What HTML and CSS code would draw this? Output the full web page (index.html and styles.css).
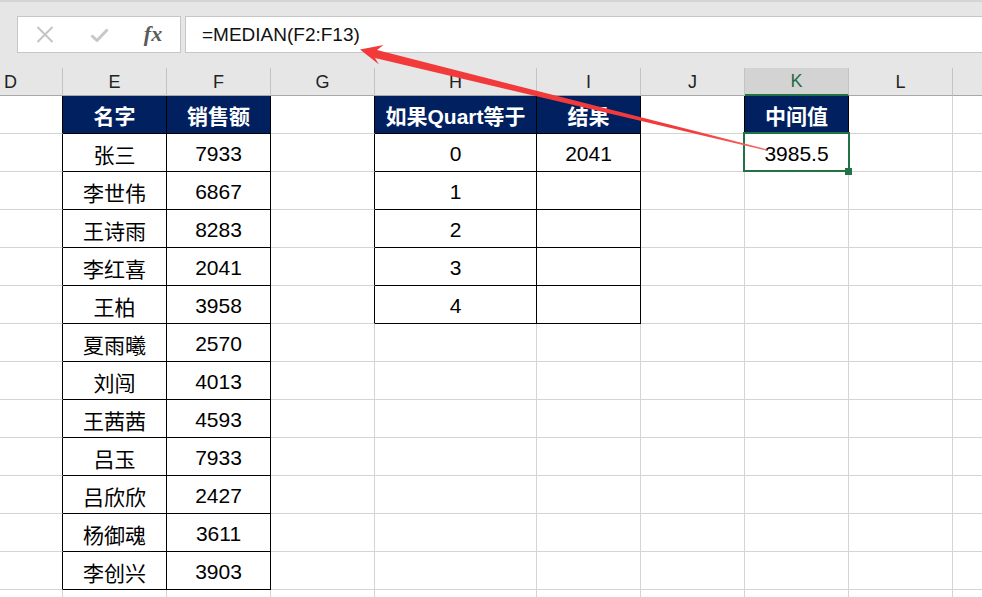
FILE: index.html
```html
<!DOCTYPE html>
<html lang="zh-CN">
<head>
  <meta charset="UTF-8">
  <meta name="viewport" content="width=device-width, initial-scale=1.0">
  <title>MEDIAN</title>
  <link rel="stylesheet" href="styles.css">
</head>
<body>
  <div class="app">
    <div class="toolbar">
      <div class="fx-buttons">
        <span class="btn">
          <svg width="18" height="17" viewBox="0 0 18 17"><path d="M1.5 1 L16.5 16 M16.5 1 L1.5 16" stroke="#c4c4c4" stroke-width="2" fill="none"/></svg>
        </span>
        <span class="btn">
          <svg width="19" height="14" viewBox="0 0 19 14"><path d="M1.5 7.5 L7 12.5 L17.5 1.5" stroke="#c8c8c8" stroke-width="3" fill="none"/></svg>
        </span>
        <span class="btn fx">fx</span>
      </div>
      <div class="formula">=MEDIAN(F2:F13)</div>
    </div>

    <div class="sheet" id="sheet"></div>

    <!-- annotation arrow drawn over the sheet -->
    <svg class="arrow" width="982" height="597" viewBox="0 0 982 597">
      <defs>
        <linearGradient id="fade" x1="361" y1="50" x2="767" y2="150" gradientUnits="userSpaceOnUse">
          <stop offset="0" stop-color="#f23a3a"/>
          <stop offset="0.8" stop-color="#f23a3a"/>
          <stop offset="1" stop-color="#f56a6a"/>
        </linearGradient>
      </defs>
      <polygon fill="url(#fade)" points="360,49.5 383.5,45 377,50 767.1,149.4 766.9,150.6 375,58 379,64.5"/>
    </svg>
  </div>

  <script>
    const sheet = document.getElementById('sheet');
    const letters = ['D', 'E', 'F', 'G', 'H', 'I', 'J', 'K', 'L', ''];

    const names = [
      ['名字', '销售额'],
      ['张三', '7933'],
      ['李世伟', '6867'],
      ['王诗雨', '8283'],
      ['李红喜', '2041'],
      ['王柏', '3958'],
      ['夏雨曦', '2570'],
      ['刘闯', '4013'],
      ['王茜茜', '4593'],
      ['吕玉', '7933'],
      ['吕欣欣', '2427'],
      ['杨御魂', '3611'],
      ['李创兴', '3903']
    ];

    const quart = [
      ['如果Quart等于', '结果'],
      ['0', '2041'],
      ['1', ''],
      ['2', ''],
      ['3', ''],
      ['4', '']
    ];

    letters.forEach(l => {
      const head = document.createElement('div');
      head.className = 'ch' + (l === 'K' ? ' active' : '');
      head.textContent = l;
      sheet.appendChild(head);
    });

    for (let r = 0; r < 14; r++) {
      for (let c = 0; c < letters.length; c++) {
        const cell = document.createElement('div');
        cell.classList.add('cell');

        if ((c === 1 || c === 2) && r < names.length) {
          cell.textContent = names[r][c - 1];
          cell.classList.add('box');
          if (r === 0) cell.classList.add('head');
        }
        if ((c === 4 || c === 5) && r < quart.length) {
          cell.textContent = quart[r][c - 4];
          cell.classList.add('box');
          if (r === 0) cell.classList.add('head');
        }
        if (c === 7 && r === 0) {
          cell.textContent = '中间值';
          cell.classList.add('box', 'head');
        }
        if (c === 7 && r === 1) {
          cell.textContent = '3985.5';
          cell.classList.add('sel');
        }

        // left edge of each table sits on the neighbour's right border
        if (c === 0 && r < names.length) cell.classList.add('edge');
        if (c === 3 && r < quart.length) cell.classList.add('edge');
        if (c === 6 && r === 0) cell.classList.add('edge');

        sheet.appendChild(cell);
      }
    }
  </script>
</body>
</html>
```

FILE: styles.css
```css
body {
  margin: 0;
  padding: 0;
  background: #fff;
  font-family: "Liberation Sans", "Noto Sans CJK SC", sans-serif;
}
.app {
  width: 982px;
  height: 597px;
  overflow: hidden;
  position: relative;
  background: #fff;
}
.toolbar {
  height: 68px;
  box-sizing: border-box;
  background: #e6e6e6;
  border-top: 2px solid #d4d4d4;
  padding: 14px 0 0 17px;
  display: flex;
  gap: 4px;
}
.fx-buttons {
  width: 164px;
  height: 37px;
  box-sizing: border-box;
  border: 1px solid #c6c6c6;
  background: #fff;
  display: flex;
}
.btn {
  width: 54px;
  display: flex;
  align-items: center;
  justify-content: center;
}
.btn.fx {
  font-family: "Liberation Serif", serif;
  font-style: italic;
  font-weight: bold;
  font-size: 22px;
  color: #5a5a5a;
  padding-bottom: 2px;
}
.formula {
  flex: 1;
  height: 37px;
  box-sizing: border-box;
  border: 1px solid #c6c6c6;
  border-right: none;
  background: #fff;
  padding-left: 16px;
  font-size: 19px;
  color: #111;
  display: flex;
  align-items: center;
}
.sheet {
  display: grid;
  grid-template-columns: 104px 104px 104px 104px 162px 104px 104px 104px 104px 104px;
  grid-template-rows: 28px;
  grid-auto-rows: 38px;
  margin-left: -41px;
}
.ch {
  box-sizing: border-box;
  background: #e6e6e6;
  border-right: 1px solid #c3c3c3;
  border-bottom: 1px solid #a8a8a8;
  font-size: 18px;
  color: #222;
  padding-top: 1px;
  display: flex;
  align-items: center;
  justify-content: center;
}
.ch.active {
  background: #d3d3d3;
  color: #1e6b44;
  border-bottom: 2px solid #217346;
}
.cell {
  box-sizing: border-box;
  border-right: 1px solid #d4d4d4;
  border-bottom: 1px solid #d4d4d4;
  font-size: 21px;
  color: #000;
  white-space: nowrap;
  padding-top: 2px;
  display: flex;
  align-items: center;
  justify-content: center;
}
.cell.box {
  border-color: #000;
}
.cell.edge {
  border-right-color: #000;
}
.cell.head {
  background: #002060;
  color: #fff;
  font-weight: bold;
  padding-top: 0;
}
.cell.sel {
  position: relative;
}
.cell.sel::before {
  content: '';
  position: absolute;
  left: -2px;
  top: -2px;
  right: -2px;
  bottom: -1px;
  border: 2px solid #217346;
}
.cell.sel::after {
  content: '';
  position: absolute;
  width: 7px;
  height: 7px;
  right: -4px;
  bottom: -4px;
  background: #217346;
}
.arrow {
  position: absolute;
  top: 0;
  left: 0;
  pointer-events: none;
}
```
